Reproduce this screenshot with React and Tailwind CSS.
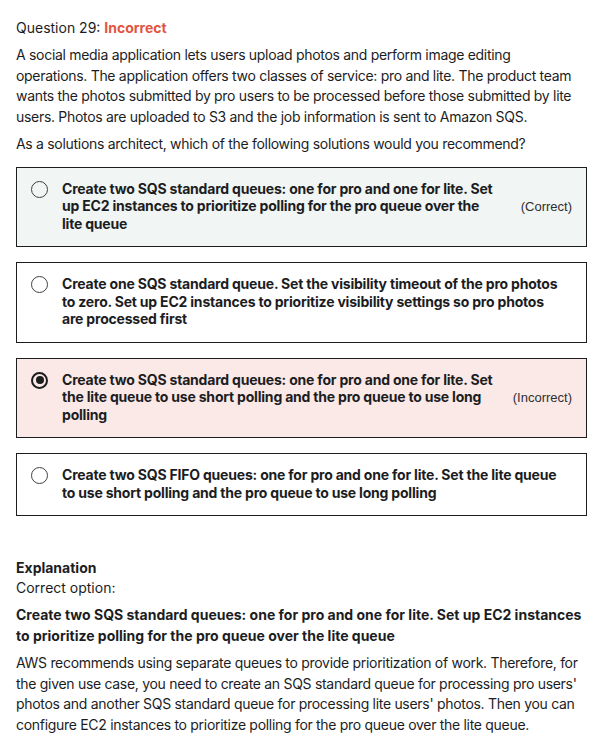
import { useState } from "react";

const FONT = "font-['Inter','Liberation_Sans',sans-serif]";

/* ── radio glyph ─────────────────────────────────────── */
function Radio({ checked }) {
  return (
    <span
      className={`mt-[1px] flex h-[17px] w-[17px] shrink-0 items-center justify-center rounded-full ${
        checked ? "border-2 border-[#1c1d1f]" : "border-[1.5px] border-[#3e4143]"
      }`}
    >
      {checked && <span className="h-[8px] w-[8px] rounded-full bg-[#1c1d1f]" />}
    </span>
  );
}

/* ── answer option ───────────────────────────────────── */
function Option({ lines, tag, checked, tone }) {
  const bg =
    tone === "correct" ? "bg-[#f1f5f3]" : tone === "incorrect" ? "bg-[#fbe9e7]" : "bg-white";
  return (
    <div className={`flex items-start border border-[#1c1d1f] ${bg} pl-[14px] pr-[14px] pt-[12px] pb-[14px]`}>
      <Radio checked={checked} />
      <div className="ml-[14px] flex-1 text-[14px] font-bold leading-[17.5px] tracking-[-0.2px] text-[#1c1d1f]">
        {lines.map((l, i) => (
          <div key={i}>{l}</div>
        ))}
      </div>
      {tag && (
        <span className="mt-[17px] font-['Liberation_Sans',sans-serif] text-[13px] text-[#2d2f31]">
          {tag}
        </span>
      )}
    </div>
  );
}

export default function App() {
  const [picked] = useState(2);

  const options = [
    {
      lines: [
        "Create two SQS standard queues: one for pro and one for lite. Set",
        "up EC2 instances to prioritize polling for the pro queue over the",
        "lite queue",
      ],
      tag: "(Correct)",
      tone: "correct",
    },
    {
      lines: [
        "Create one SQS standard queue. Set the visibility timeout of the pro photos",
        "to zero. Set up EC2 instances to prioritize visibility settings so pro photos",
        "are processed first",
      ],
    },
    {
      lines: [
        "Create two SQS standard queues: one for pro and one for lite. Set",
        "the lite queue to use short polling and the pro queue to use long",
        "polling",
      ],
      tag: "(Incorrect)",
      tone: "incorrect",
    },
    {
      lines: [
        "Create two SQS FIFO queues: one for pro and one for lite. Set the lite queue",
        "to use short polling and the pro queue to use long polling",
      ],
    },
  ];

  return (
    <div className={`min-h-[744px] w-[612px] bg-white px-[16px] pt-[18px] text-[#1c1d1f] ${FONT}`}>
      {/* ── question header ─────────────────────────── */}
      <p className="text-[14px] leading-[20px]">
        Question 29: <span className="font-bold text-[#e2553f]">Incorrect</span>
      </p>

      <p className="mt-[7px] text-[14px] leading-[20.7px] tracking-[-0.3px]">
        A social media application lets users upload photos and perform image editing
        <br />
        operations. The application offers two classes of service: pro and lite. The product team
        <br />
        wants the photos submitted by pro users to be processed before those submitted by lite
        <br />
        users. Photos are uploaded to S3 and the job information is sent to Amazon SQS.
      </p>
      <p className="mt-[6px] text-[14px] leading-[20.7px] tracking-[-0.3px]">
        As a solutions architect, which of the following solutions would you recommend?
      </p>

      {/* ── options ─────────────────────────────────── */}
      <div className="mt-[12px] flex w-[571px] flex-col gap-[15px]">
        {options.map((o, i) => (
          <Option key={i} {...o} checked={i === picked} />
        ))}
      </div>

      {/* ── explanation ─────────────────────────────── */}
      <div className="mt-[41px]">
        <p className="text-[14px] font-bold leading-[21px]">Explanation</p>
        <p className="text-[14px] leading-[20px]">Correct option:</p>
        <p className="mt-[6px] text-[14px] font-bold leading-[21px]">
          Create two SQS standard queues: one for pro and one for lite. Set up EC2 instances
          <br />
          to prioritize polling for the pro queue over the lite queue
        </p>
        <p className="mt-[7px] text-[14px] leading-[20.5px] tracking-[-0.3px]">
          AWS recommends using separate queues to provide prioritization of work. Therefore, for
          <br />
          the given use case, you need to create an SQS standard queue for processing pro users'
          <br />
          photos and another SQS standard queue for processing lite users' photos. Then you can
          <br />
          configure EC2 instances to prioritize polling for the pro queue over the lite queue.
        </p>
      </div>
    </div>
  );
}
